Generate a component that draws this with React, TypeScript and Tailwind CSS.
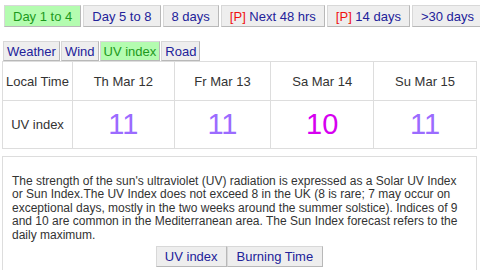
const days = [
  { label: 'Th Mar 12', uv: 11 },
  { label: 'Fr Mar 13', uv: 11 },
  { label: 'Sa Mar 14', uv: 10 },
  { label: 'Su Mar 15', uv: 11 },
];

const Tab = ({ children, active, className = '' }: { children: React.ReactNode; active?: boolean; className?: string }) => (
  <div
    className={
      'flex items-center border border-t-[#d8d8d8] border-l-[#d8d8d8] border-r-[#b8b8b8] border-b-[#b8b8b8] whitespace-nowrap ' +
      (active ? 'bg-[#b4fcb0] text-[#1c9a1c] ' : 'bg-[#eeeeee] text-[#22229a] ') +
      className
    }
  >
    {children}
  </div>
);

const P = () => <span className="text-[#f01010]">[P]</span>;

export default function App() {
  return (
    <div className="w-[480px] h-[270px] overflow-hidden bg-white font-['Liberation_Sans',Arial,sans-serif] text-[13px] leading-none">
      <div className="flex gap-[2px] pl-[4px] pt-[5px]">
        <Tab active className="h-[22px] px-[8px]">Day 1 to 4</Tab>
        <Tab className="h-[22px] px-[8px]">Day 5 to 8</Tab>
        <Tab className="h-[22px] px-[8px]">8 days</Tab>
        <Tab className="h-[22px] px-[8px]"><P />&nbsp;Next 48 hrs</Tab>
        <Tab className="h-[22px] px-[8px]"><P />&nbsp;14 days</Tab>
        <Tab className="h-[22px] px-[8px]">&gt;30 days</Tab>
      </div>

      <div className="flex gap-[1px] pl-[3px] pt-[14px]">
        <Tab className="h-[20px] px-[3px]">Weather</Tab>
        <Tab className="h-[20px] px-[3px]">Wind</Tab>
        <Tab active className="h-[20px] px-[3px]">UV index</Tab>
        <Tab className="h-[20px] px-[3px]">Road</Tab>
      </div>

      <table className="ml-[2px] w-[475px] border-collapse text-[#333]">
        <tbody>
          <tr className="h-[39px]">
            <td className="w-[70px] border border-[#dddddd] text-center">Local Time</td>
            {days.map((d) => (
              <td key={d.label} className="border border-[#dddddd] text-center">{d.label}</td>
            ))}
          </tr>
          <tr className="h-[48px]">
            <td className="border border-[#dddddd] text-center">UV index</td>
            {days.map((d) => (
              <td
                key={d.label}
                className={
                  'border border-[#dddddd] text-center text-[29px] ' +
                  (d.uv >= 11 ? 'text-[#9b6bff]' : 'text-[#d600f0]')
                }
              >
                {d.uv}
              </td>
            ))}
          </tr>
        </tbody>
      </table>

      <div className="ml-[2px] mt-[7px] w-[475px] h-[120px] border border-[#dddddd] px-[9px] pt-[18px]">
        <p className="text-[12px] leading-[13.4px] text-[#333]">
          The strength of the sun's ultraviolet (UV) radiation is expressed as a Solar UV Index or Sun Index.The UV Index does not exceed 8 in the UK (8 is rare; 7 may occur on exceptional days, mostly in the two weeks around the summer solstice). Indices of 9 and 10 are common in the Mediterranean area. The Sun Index forecast refers to the daily maximum.
        </p>
        <div className="flex justify-center mt-[4px]">
          <Tab className="h-[21px] px-[8px]">UV index</Tab>
          <Tab className="h-[21px] px-[9px]">Burning Time</Tab>
        </div>
      </div>
    </div>
  );
}
